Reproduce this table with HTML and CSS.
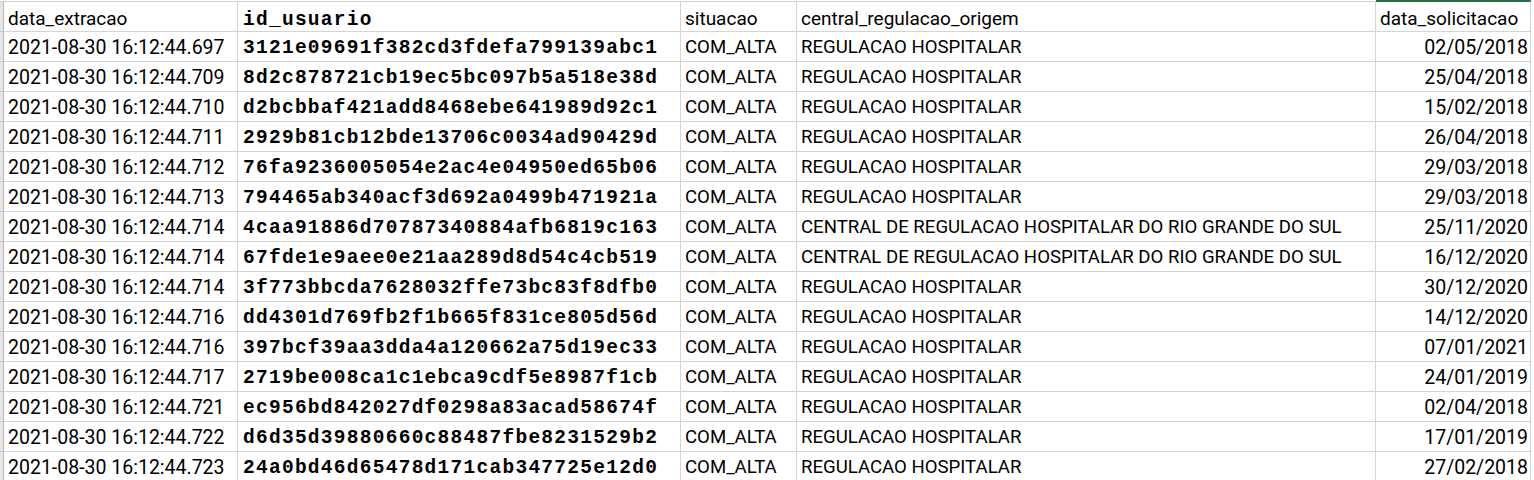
FILE: index.html
```html
<!DOCTYPE html>
<html>

<head>
    <meta charset="UTF-8">
    <meta name="viewport" content="width=device-width,initial-scale=1">
    <link rel="stylesheet" href="styles.css">
    <title>internacoes.csv</title>
</head>

<body>
    <div class="sheet">
        <div class="row head">
            <span class="cell edge"></span>
            <span class="cell">data_extracao</span>
            <span class="cell hash">id_usuario</span>
            <span class="cell">situacao</span>
            <span class="cell">central_regulacao_origem</span>
            <span class="cell selected">data_solicitacao</span>
        </div>
        <div class="row">
            <span class="cell edge"></span>
            <span class="cell stamp">2021-08-30 16:12:44.697</span>
            <span class="cell hash">3121e09691f382cd3fdefa799139abc1</span>
            <span class="cell caps">COM_ALTA</span>
            <span class="cell caps">REGULACAO HOSPITALAR</span>
            <span class="cell date">02/05/2018</span>
        </div>
        <div class="row">
            <span class="cell edge"></span>
            <span class="cell stamp">2021-08-30 16:12:44.709</span>
            <span class="cell hash">8d2c878721cb19ec5bc097b5a518e38d</span>
            <span class="cell caps">COM_ALTA</span>
            <span class="cell caps">REGULACAO HOSPITALAR</span>
            <span class="cell date">25/04/2018</span>
        </div>
        <div class="row">
            <span class="cell edge"></span>
            <span class="cell stamp">2021-08-30 16:12:44.710</span>
            <span class="cell hash">d2bcbbaf421add8468ebe641989d92c1</span>
            <span class="cell caps">COM_ALTA</span>
            <span class="cell caps">REGULACAO HOSPITALAR</span>
            <span class="cell date">15/02/2018</span>
        </div>
        <div class="row">
            <span class="cell edge"></span>
            <span class="cell stamp">2021-08-30 16:12:44.711</span>
            <span class="cell hash">2929b81cb12bde13706c0034ad90429d</span>
            <span class="cell caps">COM_ALTA</span>
            <span class="cell caps">REGULACAO HOSPITALAR</span>
            <span class="cell date">26/04/2018</span>
        </div>
        <div class="row">
            <span class="cell edge"></span>
            <span class="cell stamp">2021-08-30 16:12:44.712</span>
            <span class="cell hash">76fa9236005054e2ac4e04950ed65b06</span>
            <span class="cell caps">COM_ALTA</span>
            <span class="cell caps">REGULACAO HOSPITALAR</span>
            <span class="cell date">29/03/2018</span>
        </div>
        <div class="row">
            <span class="cell edge"></span>
            <span class="cell stamp">2021-08-30 16:12:44.713</span>
            <span class="cell hash">794465ab340acf3d692a0499b471921a</span>
            <span class="cell caps">COM_ALTA</span>
            <span class="cell caps">REGULACAO HOSPITALAR</span>
            <span class="cell date">29/03/2018</span>
        </div>
        <div class="row">
            <span class="cell edge"></span>
            <span class="cell stamp">2021-08-30 16:12:44.714</span>
            <span class="cell hash">4caa91886d70787340884afb6819c163</span>
            <span class="cell caps">COM_ALTA</span>
            <span class="cell caps">CENTRAL DE REGULACAO HOSPITALAR DO RIO GRANDE DO SUL</span>
            <span class="cell date">25/11/2020</span>
        </div>
        <div class="row">
            <span class="cell edge"></span>
            <span class="cell stamp">2021-08-30 16:12:44.714</span>
            <span class="cell hash">67fde1e9aee0e21aa289d8d54c4cb519</span>
            <span class="cell caps">COM_ALTA</span>
            <span class="cell caps">CENTRAL DE REGULACAO HOSPITALAR DO RIO GRANDE DO SUL</span>
            <span class="cell date">16/12/2020</span>
        </div>
        <div class="row">
            <span class="cell edge"></span>
            <span class="cell stamp">2021-08-30 16:12:44.714</span>
            <span class="cell hash">3f773bbcda7628032ffe73bc83f8dfb0</span>
            <span class="cell caps">COM_ALTA</span>
            <span class="cell caps">REGULACAO HOSPITALAR</span>
            <span class="cell date">30/12/2020</span>
        </div>
        <div class="row">
            <span class="cell edge"></span>
            <span class="cell stamp">2021-08-30 16:12:44.716</span>
            <span class="cell hash">dd4301d769fb2f1b665f831ce805d56d</span>
            <span class="cell caps">COM_ALTA</span>
            <span class="cell caps">REGULACAO HOSPITALAR</span>
            <span class="cell date">14/12/2020</span>
        </div>
        <div class="row">
            <span class="cell edge"></span>
            <span class="cell stamp">2021-08-30 16:12:44.716</span>
            <span class="cell hash">397bcf39aa3dda4a120662a75d19ec33</span>
            <span class="cell caps">COM_ALTA</span>
            <span class="cell caps">REGULACAO HOSPITALAR</span>
            <span class="cell date">07/01/2021</span>
        </div>
        <div class="row">
            <span class="cell edge"></span>
            <span class="cell stamp">2021-08-30 16:12:44.717</span>
            <span class="cell hash">2719be008ca1c1ebca9cdf5e8987f1cb</span>
            <span class="cell caps">COM_ALTA</span>
            <span class="cell caps">REGULACAO HOSPITALAR</span>
            <span class="cell date">24/01/2019</span>
        </div>
        <div class="row">
            <span class="cell edge"></span>
            <span class="cell stamp">2021-08-30 16:12:44.721</span>
            <span class="cell hash">ec956bd842027df0298a83acad58674f</span>
            <span class="cell caps">COM_ALTA</span>
            <span class="cell caps">REGULACAO HOSPITALAR</span>
            <span class="cell date">02/04/2018</span>
        </div>
        <div class="row">
            <span class="cell edge"></span>
            <span class="cell stamp">2021-08-30 16:12:44.722</span>
            <span class="cell hash">d6d35d39880660c88487fbe8231529b2</span>
            <span class="cell caps">COM_ALTA</span>
            <span class="cell caps">REGULACAO HOSPITALAR</span>
            <span class="cell date">17/01/2019</span>
        </div>
        <div class="row">
            <span class="cell edge"></span>
            <span class="cell stamp">2021-08-30 16:12:44.723</span>
            <span class="cell hash">24a0bd46d65478d171cab347725e12d0</span>
            <span class="cell caps">COM_ALTA</span>
            <span class="cell caps">REGULACAO HOSPITALAR</span>
            <span class="cell date">27/02/2018</span>
        </div>
    </div>
</body>

</html>
```

FILE: styles.css
```css
*,
*::before,
*::after {
    box-sizing: border-box;
    padding: 0;
    margin: 0;
}

body {
    height: 100vh;
    overflow: hidden;
    background: #fff;
    color: #000;
    font-family: Roboto, "Liberation Sans", sans-serif;
}

.sheet {
    padding-top: 1px;
}

.row {
    display: grid;
    grid-template-columns: 4px 234px 443px 116px 579px 155px;
}

.cell {
    display: block;
    height: 30px;
    padding: 2px 4px 0;
    line-height: 27px;
    font-size: 19px;
    white-space: nowrap;
    overflow: hidden;
    border-right: 1px solid #d4d4d4;
    border-bottom: 1px solid #d4d4d4;
}

.cell.edge {
    padding: 0;
    background: #e6e6e6;
    border-right-color: #b8b8b8;
    border-bottom-color: #c8c8c8;
}

.head>.cell {
    height: 31px;
    padding-top: 5px;
    line-height: 24px;
    border-top: 1px solid #d4d4d4;
}

.head>.cell.hash {
    padding-top: 8px;
    line-height: 21px;
}

.head>.cell.selected {
    border-top-color: #217346;
    box-shadow: 0 -1px 0 #217346;
}

.cell.stamp,
.cell.date {
    font-size: 19.5px;
}

.cell.date {
    text-align: right;
    padding-right: 2px;
}

.cell.caps {
    font-size: 18.6px;
}

.cell.hash {
    padding-top: 4px;
    line-height: 25px;
    font-family: "Liberation Mono", monospace;
    font-weight: bold;
    font-size: 19.5px;
    letter-spacing: 1.27px;
    padding-left: 5px;
}
```
